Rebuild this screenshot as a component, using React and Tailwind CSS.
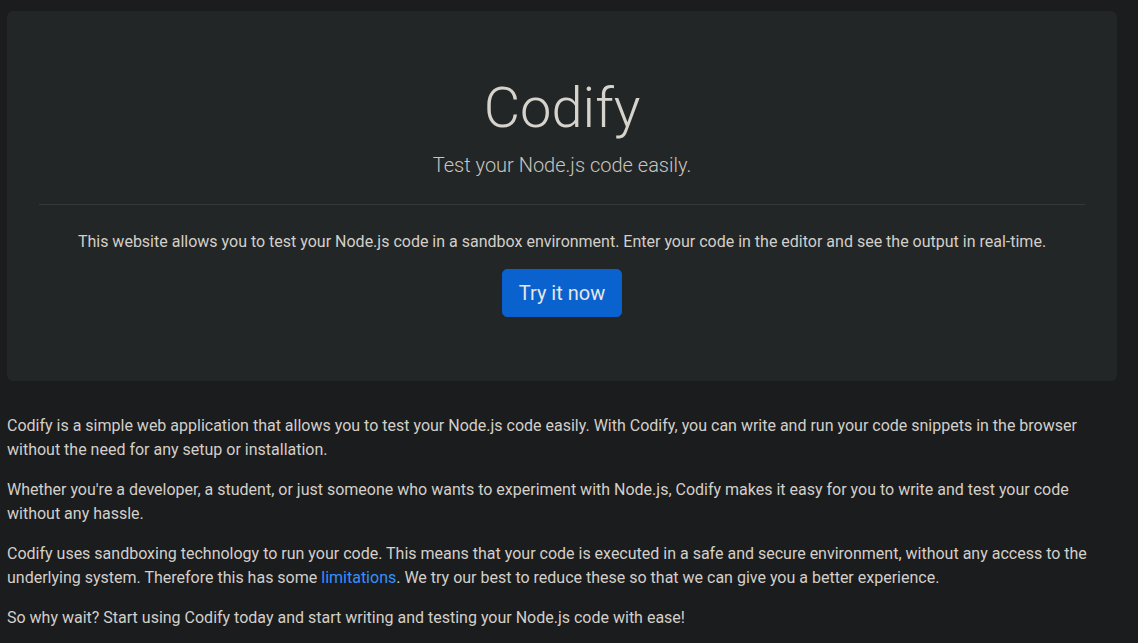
const App = () => {
  return (
    <div
      className="min-h-screen bg-[#1b1c1e] text-[#d3cfc9]"
      style={{ fontFamily: 'Roboto, "Liberation Sans", sans-serif' }}
    >
      <div className="ml-[7px] w-[1110px] pt-[11px]">
        <div className="mb-[33px] rounded-md bg-[#222627] px-8 py-16 text-center">
          <h1 className="text-[56px] font-light leading-[1.2] text-[#d6d2cc]">Codify</h1>
          <p className="mt-2 text-[20px] font-light leading-[1.5] text-[#c9c5bf]">Test your Node.js code easily.</p>
          <hr className="mt-6 mb-[25px] border-t border-[#33383a]" />
          <p className="mb-[15px] text-base leading-6">
            This website allows you to test your Node.js code in a sandbox environment. Enter your code in the editor and see the output in real-time.
          </p>
          <button
            type="button"
            className="rounded-[5px] border border-[#0b5ed0] bg-[#0a62cf] px-4 py-2 text-[20px] leading-[30px] text-[#e8e6e3]"
          >
            Try it now
          </button>
        </div>

        <p className="mb-4 text-base leading-6">
          Codify is a simple web application that allows you to test your Node.js code easily. With Codify, you can write and run your code snippets in the browser without the need for any setup or installation.
        </p>
        <p className="mb-4 text-base leading-6">
          Whether you're a developer, a student, or just someone who wants to experiment with Node.js, Codify makes it easy for you to write and test your code without any hassle.
        </p>
        <p className="mb-4 text-base leading-6">
          Codify uses sandboxing technology to run your code. This means that your code is executed in a safe and secure environment, without any access to the underlying system. Therefore this has some{' '}
          <a href="#" className="text-[#3391ff]">limitations</a>. We try our best to reduce these so that we can give you a better experience.
        </p>
        <p className="mb-4 text-base leading-6">
          So why wait? Start using Codify today and start writing and testing your Node.js code with ease!
        </p>
      </div>
    </div>
  );
};

export default App;
